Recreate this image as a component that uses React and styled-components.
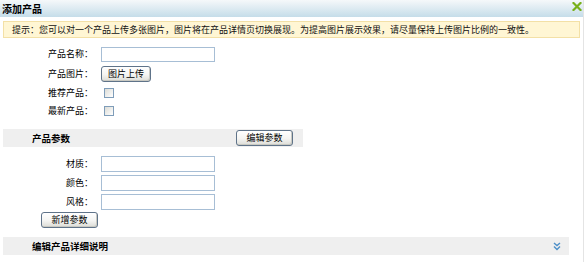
import React from "react";
import styled, { createGlobalStyle } from "styled-components";

const Global = createGlobalStyle`
  html, body { margin: 0; padding: 0; background: #fff; }
  body { font-family: "Noto Sans CJK SC", "Noto Sans", sans-serif; }
  * { box-sizing: border-box; }
`;

const Dialog = styled.div`
  width: 584px;
  height: 262px;
  overflow: hidden;
  background: #fff;
  font-size: 9px;
  color: #000;
  border-right: 1px solid #e4e4e4;
`;

const TitleBar = styled.div`
  height: 17px;
  display: flex;
  align-items: center;
  justify-content: space-between;
  padding: 0 1px 0 2px;
  background: linear-gradient(#f5f8fa, #c5dde9);
`;

const Title = styled.span`
  font-size: 10px;
  font-weight: bold;
  color: #000;
  line-height: 17px;
`;

const Close = styled.svg`
  width: 10px;
  height: 9px;
  margin-top: -5px;
`;

const Content = styled.div`
  padding: 4px 3px 0 3px;
`;

const Notice = styled.div`
  height: 17px;
  border: 1px solid #f3e0a6;
  background: #fff6d4;
  padding-left: 8px;
  line-height: 15px;
  white-space: nowrap;
  color: #111;
`;

const Form = styled.div`
  margin-top: 6px;
  display: flex;
  flex-direction: column;
`;

const Row = styled.div`
  display: grid;
  grid-template-columns: ${(p) => p.$labelWidth || 90}px 1fr;
  column-gap: 8px;
  align-items: center;
  height: ${(p) => p.$h || 18}px;
  margin-bottom: ${(p) => p.$gap || 0}px;
`;

const Label = styled.span`
  text-align: right;
  white-space: nowrap;
  line-height: 12px;
`;

const Input = styled.input`
  width: 114px;
  height: ${(p) => p.$h || 16}px;
  border: 1px solid #a7bed5;
  background: #fff;
  padding: 0 2px;
  margin: 0;
  font-size: 9px;
  outline: none;
`;

const Button = styled.button`
  appearance: none;
  width: ${(p) => p.$w}px;
  height: 16px;
  margin: 0;
  margin-left: ${(p) => p.$ml || 0}px;
  padding: 0;
  border: 1px solid #5f7389;
  border-radius: 3px;
  background: linear-gradient(#ffffff, #f4f4f2 55%, #dcdcd6);
  box-shadow: inset -1px -1px 0 #c9c9c2;
  font-family: "Noto Sans CJK SC", "Noto Sans", sans-serif;
  font-size: 9px;
  line-height: 14px;
  color: #000;
  white-space: nowrap;
`;

const Check = styled.input.attrs({ type: "checkbox" })`
  appearance: none;
  width: 10px;
  height: 10px;
  margin: 0 0 0 3px;
  border: 1px solid #7f9db9;
  background: linear-gradient(135deg, #dcdcd6, #ffffff);
`;

const SectionHeader = styled.div`
  width: ${(p) => p.$w}px;
  height: 18px;
  margin-top: 9px;
  background: #efefef;
  display: flex;
  align-items: center;
  padding: 0 ${(p) => p.$pr || 10}px 0 29px;
`;

const SectionTitle = styled.span`
  font-weight: bold;
  font-size: 9.5px;
  color: #000;
  margin-right: auto;
`;

const Params = styled.div`
  margin-top: 8px;
  display: flex;
  flex-direction: column;
`;

const Chevron = styled.svg`
  width: 8px;
  height: 9px;
`;

const productRows = ["产品名称：", "产品图片：", "推荐产品：", "最新产品："];

export default function App() {
  return (
    <>
      <Global />
      <Dialog>
        <TitleBar>
          <Title>添加产品</Title>
          <Close viewBox="0 0 10 9">
            <path d="M1.5 1 L8.5 8 M8.5 1 L1.5 8" stroke="#78b01a" strokeWidth="2.2" strokeLinecap="square" fill="none" />
          </Close>
        </TitleBar>
        <Content>
          <Notice>
            提示：您可以对一个产品上传多张图片，图片将在产品详情页切换展现。为提高图片展示效果，请尽量保持上传图片比例的一致性。
          </Notice>
          <Form>
            <Row $h={20}>
              <Label>{productRows[0]}</Label>
              <Input $h={15} />
            </Row>
            <Row $h={20}>
              <Label>{productRows[1]}</Label>
              <Button $w={50}>图片上传</Button>
            </Row>
            <Row $h={18}>
              <Label>{productRows[2]}</Label>
              <Check />
            </Row>
            <Row $h={18}>
              <Label>{productRows[3]}</Label>
              <Check />
            </Row>
          </Form>
          <SectionHeader $w={300} $pr={10}>
            <SectionTitle>产品参数</SectionTitle>
            <Button $w={57}>编辑参数</Button>
          </SectionHeader>
          <Params>
            {["材质：", "颜色：", "风格："].map((l) => (
              <Row key={l} $h={18} $gap={1}>
                <Label>{l}</Label>
                <Input />
              </Row>
            ))}
            <div>
              <Button $w={57} $ml={38}>新增参数</Button>
            </div>
          </Params>
          <SectionHeader $w={566} $pr={8}>
            <SectionTitle>编辑产品详细说明</SectionTitle>
            <Chevron viewBox="0 0 8 9">
              <path d="M1 1 L4 3.5 L7 1 M1 4.5 L4 7.5 L7 4.5" stroke="#4d8fc8" strokeWidth="1.4" fill="none" />
            </Chevron>
          </SectionHeader>
        </Content>
      </Dialog>
    </>
  );
}
